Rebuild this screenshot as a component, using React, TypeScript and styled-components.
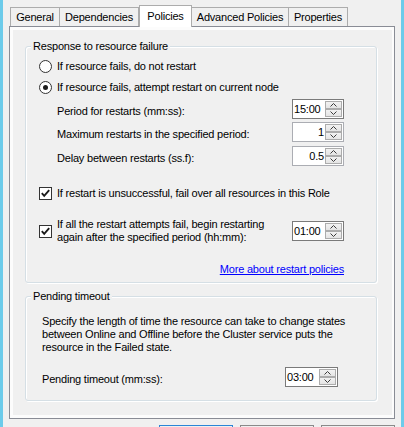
import React from "react";
import styled, { createGlobalStyle } from "styled-components";

const GlobalStyle = createGlobalStyle`
  html, body {
    margin: 0;
    padding: 0;
    background: #f0f0f0;
    overflow: hidden;
  }
  body {
    font-family: "Liberation Sans", Arial, sans-serif;
    font-size: 11px;
    letter-spacing: -0.2px;
    color: #000;
  }
`;

const Chevron = ({ down }: { down?: boolean }) => (
  <svg width="7" height="4" viewBox="0 0 7 4">
    <path
      d={down ? "M0.5 0.5 L3.5 3.5 L6.5 0.5" : "M0.5 3.5 L3.5 0.5 L6.5 3.5"}
      fill="none"
      stroke="#3c3c3c"
      strokeWidth="1"
    />
  </svg>
);

const Tick = () => (
  <svg width="11" height="11" viewBox="0 0 11 11">
    <path
      d="M1.8 5.2 L4.2 7.8 L9.2 2.2"
      fill="none"
      stroke="#1a1a1a"
      strokeWidth="1.9"
    />
  </svg>
);

const Spin = ({
  value,
  right,
  dim,
  w = 52,
}: {
  value: string;
  right?: boolean;
  dim?: boolean;
  w?: number;
}) => (
  <Spinner $dim={dim} $w={w}>
    <SpinValue $right={right}>{value}</SpinValue>
    <SpinButtons>
      <SpinButton>
        <Chevron />
      </SpinButton>
      <SpinButton>
        <Chevron down />
      </SpinButton>
    </SpinButtons>
  </Spinner>
);

const tabs = [
  { name: "General", w: 50 },
  { name: "Dependencies", w: 80 },
  { name: "Policies", w: 53, active: true },
  { name: "Advanced Policies", w: 98 },
  { name: "Properties", w: 60 },
];

const App: React.FunctionComponent = () => {
  return (
    <>
      <GlobalStyle />
      <Window>
        <Edge />
        <Frame>
          <TabStrip>
            {tabs.map((tab, idx) => (
              <Tab
                key={idx}
                $w={tab.w}
                $active={tab.active}
                $join={idx > 0 && !tab.active}
              >
                {tab.name}
              </Tab>
            ))}
          </TabStrip>
          <Panel>
            <Page>
              <Group $h={243}>
                <Legend>Response to resource failure</Legend>
                <GroupBody $pl={13} $pr={32}>
                  <OptionRow $mt={7}>
                    <Radio />
                    <span>If resource fails, do not restart</span>
                  </OptionRow>
                  <OptionRow $mt={7}>
                    <Radio $on />
                    <span>If resource fails, attempt restart on current node</span>
                  </OptionRow>
                  <FieldRow $mt={5}>
                    <FieldLabel>Period for restarts (mm:ss):</FieldLabel>
                    <Spin value="15:00" />
                  </FieldRow>
                  <FieldRow $mt={3}>
                    <FieldLabel>Maximum restarts in the specified period:</FieldLabel>
                    <Spin value="1" right dim />
                  </FieldRow>
                  <FieldRow $mt={4}>
                    <FieldLabel>Delay between restarts (ss.f):</FieldLabel>
                    <Spin value="0.5" right dim />
                  </FieldRow>
                  <OptionRow $mt={20}>
                    <Checkbox>
                      <Tick />
                    </Checkbox>
                    <span>
                      If restart is unsuccessful, fail over all resources in this Role
                    </span>
                  </OptionRow>
                  <CheckRow $mt={18}>
                    <Checkbox>
                      <Tick />
                    </Checkbox>
                    <TwoLine>
                      If all the restart attempts fail, begin restarting
                      <br />
                      again after the specified period (hh:mm):
                    </TwoLine>
                    <Spin value="01:00" />
                  </CheckRow>
                  <LinkRow>
                    <Link href="#">More about restart policies</Link>
                  </LinkRow>
                </GroupBody>
              </Group>

              <Group $h={111} $mt={7}>
                <Legend>Pending timeout</Legend>
                <GroupBody $pl={16} $pr={38}>
                  <Description>
                    Specify the length of time the resource can take to change states
                    <br />
                    between Online and Offline before the Cluster service puts the
                    <br />
                    resource in the Failed state.
                  </Description>
                  <FieldRow $mt={13} $flat>
                    <FieldLabel>Pending timeout (mm:ss):</FieldLabel>
                    <Spin value="03:00" w={53} />
                  </FieldRow>
                </GroupBody>
              </Group>
            </Page>
          </Panel>
          <ButtonRow>
            <DialogButton $primary />
            <DialogButton />
            <DialogButton />
          </ButtonRow>
        </Frame>
        <Edge />
      </Window>
    </>
  );
};

export default App;

interface TabProps {
  $w: number;
  $active?: boolean;
  $join?: boolean;
}

const Window = styled.div`
  display: flex;
  width: 404px;
  height: 427px;
  overflow: hidden;
  background: #f0f0f0;
`;

const Edge = styled.div`
  flex: none;
  width: 3px;
  background: #6ccbea;
`;

const Frame = styled.div`
  flex: none;
  width: 386px;
  display: flex;
  flex-direction: column;
  padding: 5px 6px 0;
`;

const TabStrip = styled.div`
  flex: none;
  display: flex;
  align-items: flex-end;
  height: 21px;
  padding-left: 1px;
  position: relative;
  z-index: 1;
`;

const Tab = styled.div<TabProps>`
  box-sizing: border-box;
  flex: none;
  width: ${(props) => props.$w}px;
  height: ${(props) => (props.$active ? 22 : 19)}px;
  margin-left: ${(props) => (props.$join ? -1 : 0)}px;
  margin-bottom: ${(props) => (props.$active ? -1 : 0)}px;
  padding-bottom: ${(props) => (props.$active ? 2 : 0)}px;
  border: 1px solid #acacac;
  border-bottom: none;
  background: ${(props) => (props.$active ? "#ffffff" : "#f0f0f0")};
  display: flex;
  align-items: center;
  justify-content: center;
  white-space: nowrap;
`;

const Panel = styled.div`
  box-sizing: border-box;
  flex: none;
  width: 386px;
  height: 393px;
  border: 1px solid #898c95;
  background: #fcfcfc;
  padding: 3px 2px 3px 3px;
  display: flex;
`;

const Page = styled.div`
  flex: 1;
  min-width: 0;
  display: flex;
  flex-direction: column;
  background: #f0f0f0;
  padding: 10px 15px 0 12px;
`;

const Group = styled.fieldset<{ $h: number; $mt?: number }>`
  box-sizing: border-box;
  flex: none;
  margin: ${(props) => props.$mt || 0}px 0 0;
  padding: 0;
  min-width: 0;
  width: 352px;
  height: ${(props) => props.$h}px;
  border: 1px solid #d5dfe5;
  border-radius: 3px;
  box-shadow: inset 1px 1px 0 #ffffff, 1px 1px 0 #ffffff;
`;

const Legend = styled.legend`
  margin-left: 5px;
  padding: 0 2px;
  line-height: 12px;
  background: #f0f0f0;
`;

const GroupBody = styled.div<{ $pl: number; $pr: number }>`
  display: flex;
  flex-direction: column;
  padding: 0 ${(props) => props.$pr}px 0 ${(props) => props.$pl}px;
`;

const OptionRow = styled.div<{ $mt: number }>`
  display: flex;
  align-items: center;
  gap: 5px;
  height: 14px;
  margin-top: ${(props) => props.$mt}px;
  white-space: nowrap;
`;

const Radio = styled.span<{ $on?: boolean }>`
  box-sizing: border-box;
  flex: none;
  width: 13px;
  height: 13px;
  border-radius: 50%;
  border: 1px solid #333333;
  background: #ffffff;
  display: flex;
  align-items: center;
  justify-content: center;

  &::after {
    content: "";
    width: 5px;
    height: 5px;
    border-radius: 50%;
    background: ${(props) => (props.$on ? "#1b1b1b" : "transparent")};
  }
`;

const Checkbox = styled.span`
  box-sizing: border-box;
  flex: none;
  width: 13px;
  height: 13px;
  border: 1px solid #333333;
  background: #ffffff;
  display: flex;
  align-items: center;
  justify-content: center;
`;

const FieldRow = styled.div<{ $mt: number; $flat?: boolean }>`
  display: flex;
  align-items: center;
  justify-content: space-between;
  height: 20px;
  margin-top: ${(props) => props.$mt}px;
  padding-left: ${(props) => (props.$flat ? 0 : 18)}px;
  white-space: nowrap;
`;

const FieldLabel = styled.span`
  padding-top: 3px;
`;

const CheckRow = styled.div<{ $mt: number }>`
  display: flex;
  align-items: center;
  gap: 5px;
  margin-top: ${(props) => props.$mt}px;
  white-space: nowrap;

  & > :last-child {
    margin-left: auto;
  }
`;

const TwoLine = styled.span`
  line-height: 13px;
`;

const LinkRow = styled.div`
  display: flex;
  justify-content: flex-end;
  align-items: center;
  height: 14px;
  margin-top: 18px;
`;

const Link = styled.a`
  color: #0000ff;
  text-decoration: underline;
`;

const Description = styled.div`
  margin-top: 13px;
  line-height: 13px;
  white-space: nowrap;
`;

const Spinner = styled.div<{ $dim?: boolean; $w: number }>`
  box-sizing: border-box;
  flex: none;
  width: ${(props) => props.$w}px;
  height: 20px;
  border: 1px solid ${(props) => (props.$dim ? "#abadb3" : "#7a7a7a")};
  background: #ffffff;
  display: flex;
`;

const SpinValue = styled.span<{ $right?: boolean }>`
  flex: 1;
  display: flex;
  align-items: center;
  justify-content: ${(props) => (props.$right ? "flex-end" : "flex-start")};
  padding: 0 1px 1px 1px;
`;

const SpinButtons = styled.div`
  display: flex;
  flex-direction: column;
  width: 17px;
  margin: 1px 1px 1px 0;
`;

const SpinButton = styled.div`
  flex: 1;
  box-sizing: border-box;
  border: 1px solid #acacac;
  background: linear-gradient(#f2f2f2, #e4e4e4);
  display: flex;
  align-items: center;
  justify-content: center;
`;

const ButtonRow = styled.div`
  flex: none;
  display: flex;
  justify-content: flex-end;
  gap: 7px;
  margin-top: 6px;
`;

const DialogButton = styled.div<{ $primary?: boolean }>`
  box-sizing: border-box;
  width: 74px;
  height: 23px;
  border: 1px solid ${(props) => (props.$primary ? "#2b85d6" : "#8a8a8a")};
  background: linear-gradient(#f0f0f0, #e5e5e5);
`;
